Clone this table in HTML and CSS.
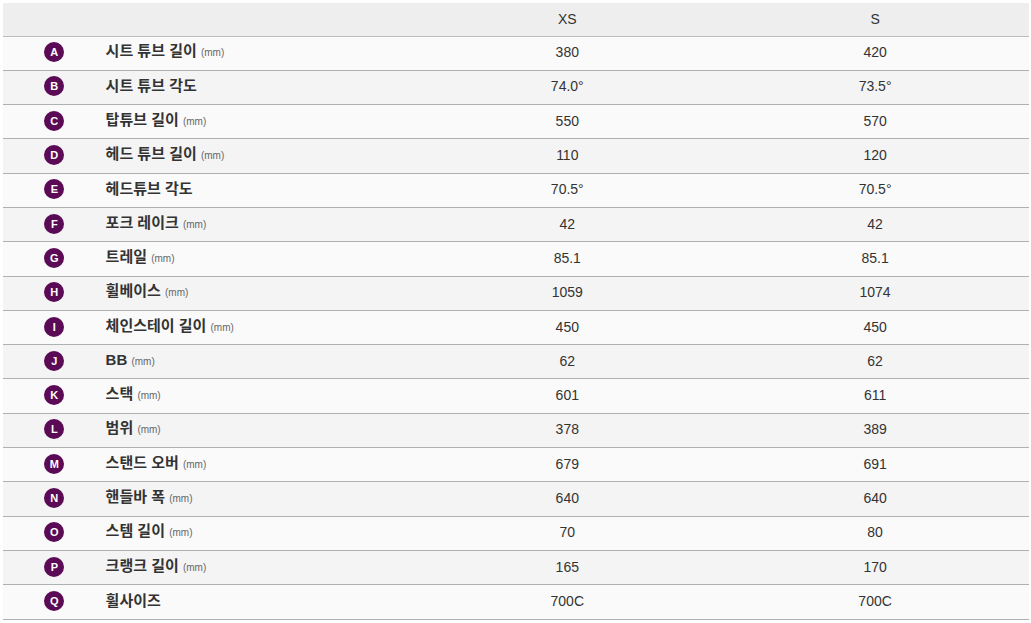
FILE: index.html
```html
<!DOCTYPE html>
<html lang="ko">
<head>
<meta charset="utf-8">
<link rel="stylesheet" href="styles.css">
</head>
<body>
<table class="geo">
  <colgroup>
    <col class="c-key"><col class="c-label"><col class="c-val"><col class="c-val">
  </colgroup>
  <thead>
    <tr><th></th><th></th><th>XS</th><th>S</th></tr>
  </thead>
  <tbody>
    <tr><td><span class="dot">A</span></td><td class="label">시트 튜브 길이 <span class="unit">(mm)</span></td><td>380</td><td>420</td></tr>
    <tr><td><span class="dot">B</span></td><td class="label">시트 튜브 각도</td><td>74.0°</td><td>73.5°</td></tr>
    <tr><td><span class="dot">C</span></td><td class="label">탑튜브 길이 <span class="unit">(mm)</span></td><td>550</td><td>570</td></tr>
    <tr><td><span class="dot">D</span></td><td class="label">헤드 튜브 길이 <span class="unit">(mm)</span></td><td>110</td><td>120</td></tr>
    <tr><td><span class="dot">E</span></td><td class="label">헤드튜브 각도</td><td>70.5°</td><td>70.5°</td></tr>
    <tr><td><span class="dot">F</span></td><td class="label">포크 레이크 <span class="unit">(mm)</span></td><td>42</td><td>42</td></tr>
    <tr><td><span class="dot">G</span></td><td class="label">트레일 <span class="unit">(mm)</span></td><td>85.1</td><td>85.1</td></tr>
    <tr><td><span class="dot">H</span></td><td class="label">휠베이스 <span class="unit">(mm)</span></td><td>1059</td><td>1074</td></tr>
    <tr><td><span class="dot">I</span></td><td class="label">체인스테이 길이 <span class="unit">(mm)</span></td><td>450</td><td>450</td></tr>
    <tr><td><span class="dot">J</span></td><td class="label">BB <span class="unit">(mm)</span></td><td>62</td><td>62</td></tr>
    <tr><td><span class="dot">K</span></td><td class="label">스택 <span class="unit">(mm)</span></td><td>601</td><td>611</td></tr>
    <tr><td><span class="dot">L</span></td><td class="label">범위 <span class="unit">(mm)</span></td><td>378</td><td>389</td></tr>
    <tr><td><span class="dot">M</span></td><td class="label">스탠드 오버 <span class="unit">(mm)</span></td><td>679</td><td>691</td></tr>
    <tr><td><span class="dot">N</span></td><td class="label">핸들바 폭 <span class="unit">(mm)</span></td><td>640</td><td>640</td></tr>
    <tr><td><span class="dot">O</span></td><td class="label">스템 길이 <span class="unit">(mm)</span></td><td>70</td><td>80</td></tr>
    <tr><td><span class="dot">P</span></td><td class="label">크랭크 길이 <span class="unit">(mm)</span></td><td>165</td><td>170</td></tr>
    <tr><td><span class="dot">Q</span></td><td class="label">휠사이즈</td><td>700C</td><td>700C</td></tr>
  </tbody>
</table>
</body>
</html>
```
FILE: styles.css
```css
html, body {
  margin: 0;
  padding: 0;
  background: #ffffff;
}
body {
  padding: 3px 2px 0 3px;
  font-family: "Liberation Sans", "Noto Sans CJK KR", Arial, sans-serif;
  color: #333333;
}
.geo {
  width: 100%;
  border-collapse: collapse;
  table-layout: fixed;
  font-size: 14px;
}
.c-key { width: 10%; }
.c-label { width: 30%; }
.c-val { width: 30%; }
.geo th {
  height: 33px;
  padding: 0 0 1px;
  background: #eeeeee;
  font-weight: normal;
  text-align: center;
  border-bottom: 1px solid #bdbdbd;
  box-sizing: border-box;
}
.geo td {
  height: 34.3px;
  padding: 0 0 2px;
  text-align: center;
  border-bottom: 1px solid #b0b0b0;
  box-sizing: border-box;
  line-height: 16px;
}
.geo tbody tr:nth-child(odd) td { background: #fafafa; }
.geo tbody tr:nth-child(even) td { background: #f4f4f4; }
.geo td.label {
  text-align: left;
  font-size: 15px;
  font-weight: bold;
  color: #333333;
}
.unit {
  font-size: 10px;
  font-weight: normal;
  color: #666666;
}
.dot {
  display: inline-flex;
  align-items: center;
  justify-content: center;
  width: 20px;
  height: 20px;
  border-radius: 50%;
  background: #5b0a55;
  color: #ffffff;
  font-size: 11px;
  font-weight: bold;
  vertical-align: middle;
}
```
